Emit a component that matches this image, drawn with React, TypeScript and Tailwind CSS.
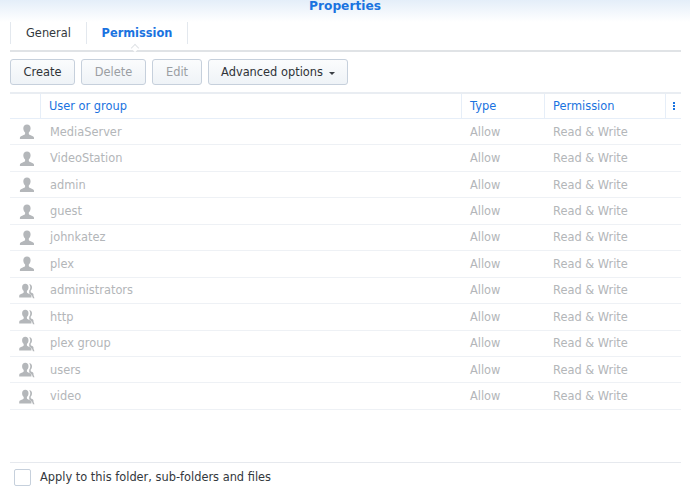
const users = ["MediaServer", "VideoStation", "admin", "guest", "johnkatez", "plex"];
const groups = ["administrators", "http", "plex group", "users", "video"];

const UserIcon = () => (
  <svg width="16" height="16" viewBox="0 0 16 16" fill="#b4b7ba">
    <path d="M8 0.5c2.2 0 3.6 1.6 3.6 3.8 0 1.8-.8 3.4-1.8 4.2v1.3c0 .8 1 1.1 2.4 1.6 1.6.6 2.8 1.1 2.8 2.4v1.2H.9v-1.2c0-1.3 1.2-1.8 2.8-2.4 1.4-.5 2.4-.8 2.4-1.6V8.500c-1-.8-1.800-2.400-1.800-4.200C4.300 2.100 5.800.5 8 .5z" />
  </svg>
);

const GroupIcon = () => (
  <svg width="16" height="16" viewBox="0 0 16 16" fill="#b4b7ba">
    <path d="M6.300.8c2 0 3.200 1.400 3.200 3.400 0 1.600-.7 3-1.600 3.800v1.300c0 .7.9 1 2.100 1.500 1.400.5 2.400 1 2.400 2.200v1.500H.2v-1.500c0-1.200 1-1.700 2.400-2.200 1.200-.5 2.100-.8 2.100-1.500V8c-.9-.8-1.600-2.200-1.600-3.800C3.100 2.200 4.300.8 6.300.8z" />
    <path d="M10.500 1.200c1.600.2 2.500 1.400 2.500 3 0 1.400-.5 2.600-1.300 3.300v1.200c0 .6.7.9 1.500 1.200.8.4 1.300.9 1.300 1.900v.9l1 2.500h-1.600c-.3-1.500-1.100-3-2.900-4.100-.7-.4-.8-.8-.8-1.300V7.800c.7-.9 1.100-2.100 1.100-3.500 0-1.200-.4-2.300-1.100-3.100z" />
  </svg>
);

const Row = ({ name, group }: { name: string; group?: boolean }) => (
  <div className="flex h-[26.45px] items-center border-b border-[#eef1f5] pt-[1px] text-[#b3b6b9]">
    <div className="flex w-[31px] justify-center pl-[2px]">{group ? <GroupIcon /> : <UserIcon />}</div>
    <div className="w-[421px] pl-[9px]">{name}</div>
    <div className="w-[83px] pl-[8px]">Allow</div>
    <div className="pl-[8px]">Read &amp; Write</div>
  </div>
);

const Button = ({ label, width, disabled, caret }: { label: string; width: string; disabled?: boolean; caret?: boolean }) => (
  <div
    className={`flex h-[26px] items-center justify-center gap-[6px] rounded-[3px] border border-[#c6d0dc] bg-gradient-to-b from-[#fbfcfd] to-[#eff3f7] pt-[1px] ${width} ${
      disabled ? "text-[#9a9ea3]" : "text-[#2f3338]"
    }`}
  >
    {label}
    {caret && <span className="mt-[1px] h-0 w-0 border-x-[3px] border-t-[3px] border-x-transparent border-t-[#3a3f45]" />}
  </div>
);

export default function App() {
  return (
    <div className="relative h-[498px] w-[690px] overflow-hidden bg-white text-[11.4px] font-['DejaVu_Sans',sans-serif]">
      <div className="h-[22px] bg-gradient-to-b from-[#e4eef9] to-white text-center text-[12.2px] font-bold leading-[13px] text-[#1a73e0]">
        Properties
      </div>
      <div className="mx-[10px] w-[671px]">
        <div className="relative flex h-[30px] border-b-2 border-[#e0e3e6]">
          <div className="flex h-[22px] w-[77px] items-center justify-center border-x border-[#e3e8ee] pt-[1px] text-[#33383d]">General</div>
          <div className="flex h-[22px] w-[101px] items-center justify-center border-r border-[#e3e8ee] pt-[1px] font-bold text-[#1a73e0]">Permission</div>
          <span className="absolute bottom-[-2px] left-[122px] h-[6px] w-[6px] translate-y-[-1px] rotate-45 border-l border-t border-[#e0e3e6] bg-white" />
        </div>
        <div className="mt-[7px] flex gap-[6px]">
          <Button label="Create" width="w-[65px]" />
          <Button label="Delete" width="w-[65px]" disabled />
          <Button label="Edit" width="w-[50px]" disabled />
          <Button label="Advanced options" width="w-[140px]" caret />
        </div>
        <div className="mt-[7px] border-t-2 border-[#e9edf2]">
          <div className="flex h-[25px] items-center border-b border-[#e6eef8] text-[#1a73e0]">
            <div className="h-full w-[31px] border-r border-[#e6eef8]" />
            <div className="flex h-full w-[421px] items-center border-r border-[#e6eef8] pl-[8px] pt-[1px]">User or group</div>
            <div className="flex h-full w-[83px] items-center border-r border-[#e6eef8] pl-[8px] pt-[1px]">Type</div>
            <div className="flex h-full w-[121px] items-center border-r border-[#e6eef8] pl-[8px] pt-[1px]">Permission</div>
            <div className="flex flex-1 flex-col items-center gap-[1px]">
              <span className="h-[2px] w-[2px] bg-[#1a73e0]" />
              <span className="h-[2px] w-[2px] bg-[#1a73e0]" />
              <span className="h-[2px] w-[2px] bg-[#1a73e0]" />
            </div>
          </div>
          {users.map((u) => (
            <Row key={u} name={u} />
          ))}
          {groups.map((g) => (
            <Row key={g} name={g} group />
          ))}
        </div>
        <div className="mt-[52px] flex items-center gap-[9px] border-t border-[#e6e9ee] pl-[4px] pt-[6px]">
          <span className="h-[17px] w-[17px] rounded-[2px] border border-[#c6d0dc] bg-white" />
          <span className="text-[#33383d]">Apply to this folder, sub-folders and files</span>
        </div>
      </div>
    </div>
  );
}
